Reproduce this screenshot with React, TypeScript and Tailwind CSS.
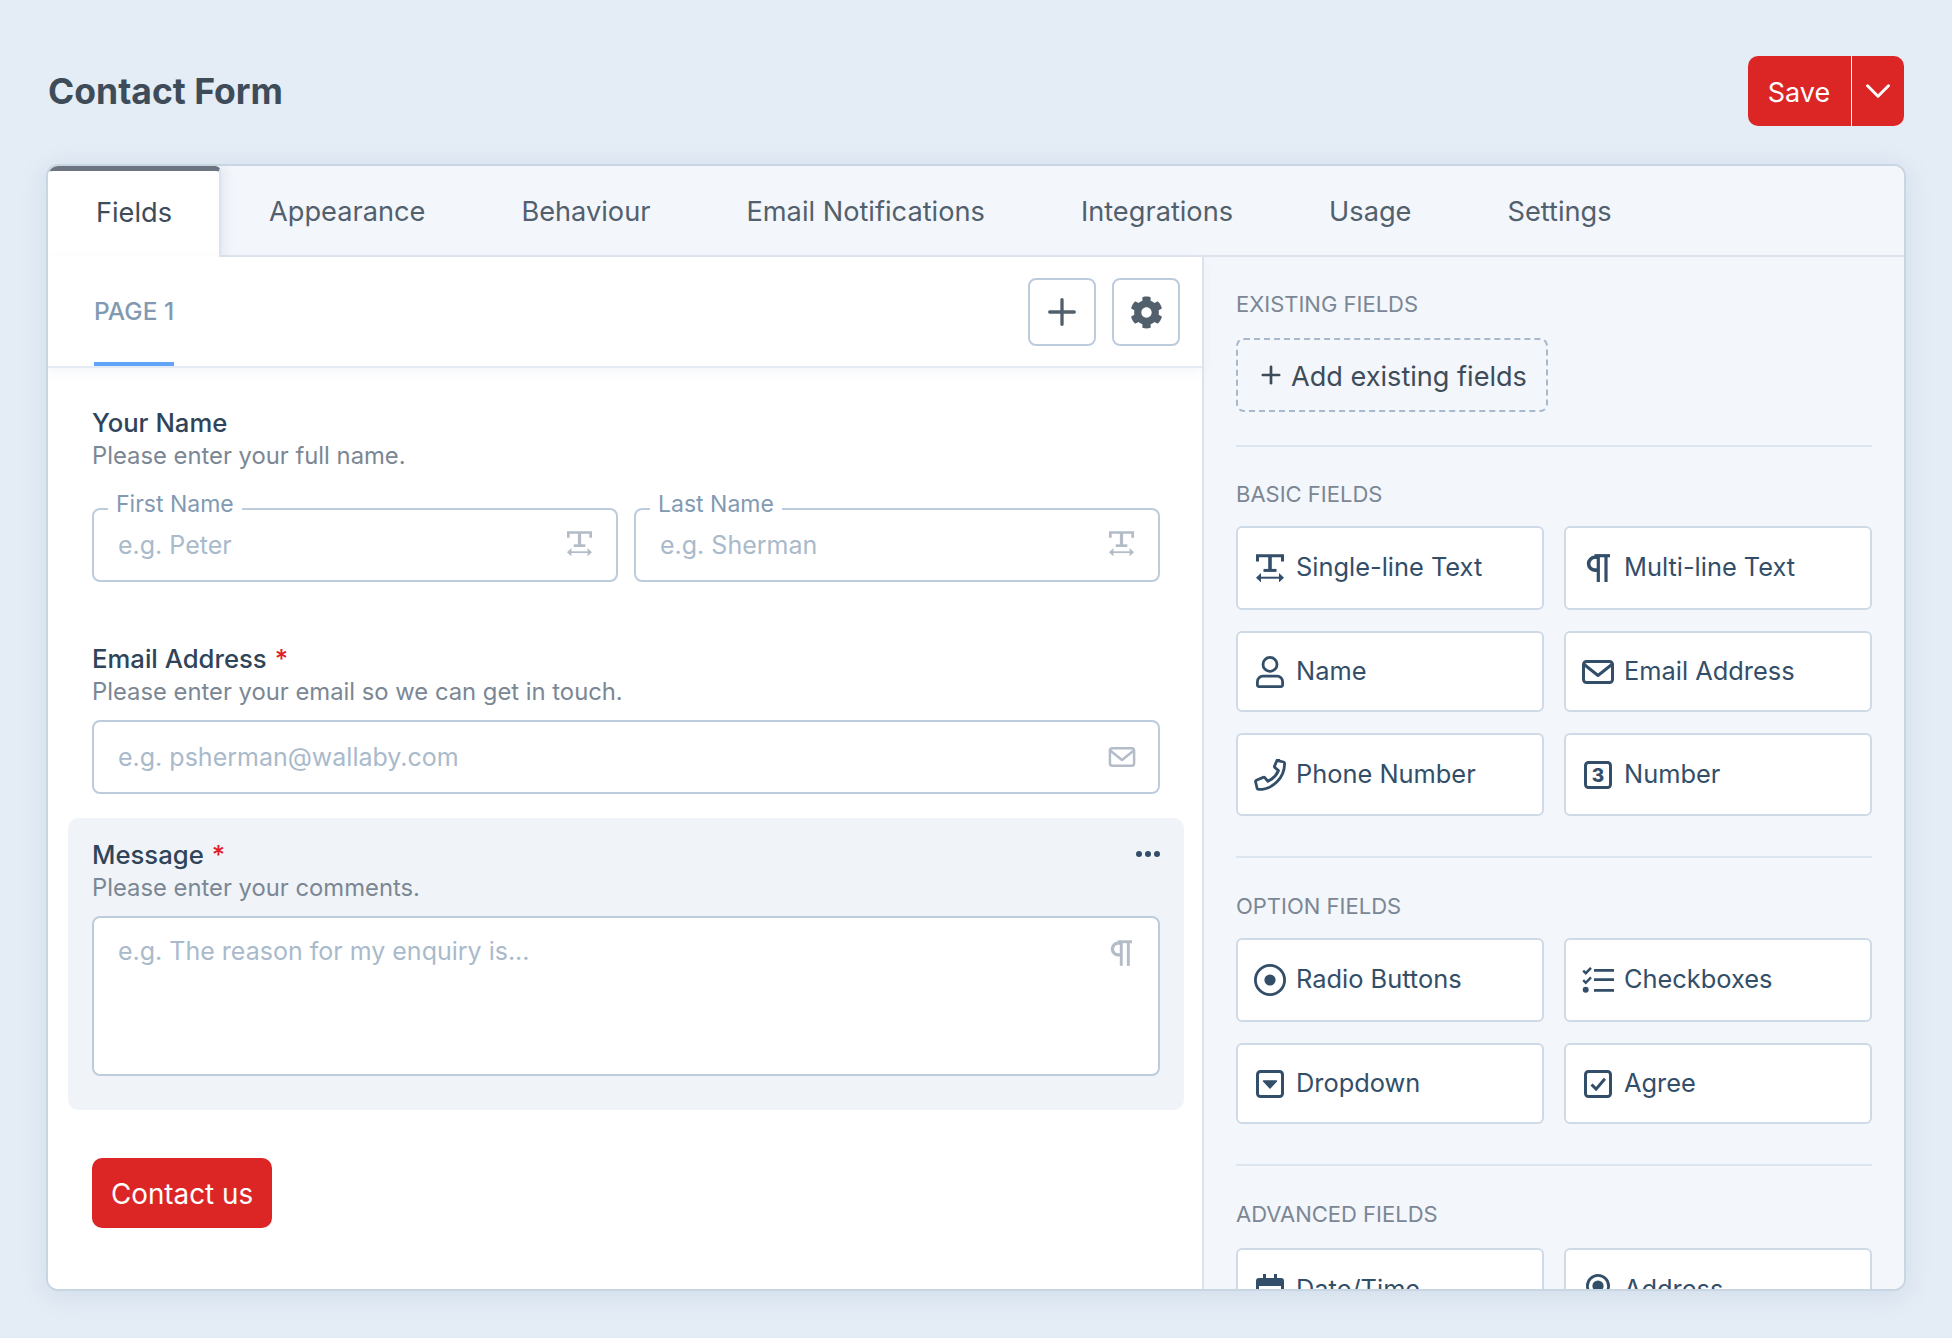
import { ReactNode } from "react";
import { FaCog } from "react-icons/fa";
import { ChevronDown, Plus } from "lucide-react";

function TextIcon({ className = "w-[28px] h-[28px]" }: { className?: string }) {
  return (
    <svg viewBox="0 0 28 28" className={className} fill="none" stroke="currentColor" strokeWidth="3">
      <path d="M1.5 7.5V1.7h25v5.8" />
      <path d="M14 2v14.5" strokeWidth="3.6" />
      <path d="M7.5 16.4h13" />
      <path d="M4 23.7h20" strokeWidth="2" />
      <path d="M5 19l-5 4.7 5 4.7z" fill="currentColor" stroke="none" />
      <path d="M23 19l5 4.7-5 4.7z" fill="currentColor" stroke="none" />
    </svg>
  );
}

function ParagraphIcon({ className = "w-[24px] h-[28px]" }: { className?: string }) {
  return (
    <svg viewBox="0 0 24 28" className={className} fill="none" stroke="currentColor" strokeWidth="3.2">
      <path d="M24 1.7H8.5" />
      <path d="M11 3.3H9a6.4 6.4 0 0 0 0 12.8h2" strokeWidth="3.6" />
      <path d="M12.3 2v26" />
      <path d="M20 2v26" />
    </svg>
  );
}

function UserIcon() {
  return (
    <svg viewBox="0 0 28 32" className="w-[28px] h-[32px]" fill="none" stroke="currentColor" strokeWidth="2.8">
      <circle cx="14" cy="8.4" r="7" />
      <path d="M7 20.2h14a5.6 5.6 0 0 1 5.6 5.6v3.2a1.6 1.6 0 0 1-1.6 1.6H3a1.6 1.6 0 0 1-1.6-1.6v-3.2A5.6 5.6 0 0 1 7 20.2z" />
    </svg>
  );
}

function MailIcon({ className = "w-[32px] h-[24px]" }: { className?: string }) {
  return (
    <svg viewBox="0 0 32 24" className={className} fill="none" stroke="currentColor" strokeWidth="3" strokeLinejoin="round">
      <rect x="1.5" y="1.5" width="29" height="21" rx="3" />
      <path d="M2.2 4.5L16 15.5 29.8 4.5" />
    </svg>
  );
}

function PhoneIcon() {
  return (
    <svg viewBox="0 0 32 32" className="w-[32px] h-[32px]" fill="none" stroke="currentColor" strokeWidth="2.8" strokeLinejoin="round">
      <path d="M23.6 1.6l6 1.4c.7.2 1 .8 1 1.5C30.6 18.8 19 30.4 4.7 30.4c-.7 0-1.4-.4-1.6-1.1l-1.5-6.3c-.2-.7.2-1.4.8-1.7l6.8-2.9c.6-.3 1.3-.1 1.8.4l2.9 3.5c4.7-2.2 8.5-6 10.6-10.7l-3.5-2.9c-.5-.4-.7-1.2-.4-1.8l2.9-6.6c.3-.6 1-.9 1.6-.7z" />
    </svg>
  );
}

function NumberIcon() {
  return (
    <svg viewBox="0 0 28 28" className="w-[28px] h-[28px]" fill="none" stroke="currentColor" strokeWidth="3">
      <rect x="1.5" y="1.5" width="25" height="25" rx="3" />
      <text x="14" y="21" textAnchor="middle" fontSize="19" fontWeight="800" fontFamily="Inter" fill="currentColor" stroke="none">3</text>
    </svg>
  );
}

function RadioIcon() {
  return (
    <svg viewBox="0 0 32 32" className="w-[32px] h-[32px]" fill="none" stroke="currentColor" strokeWidth="2.8">
      <circle cx="16" cy="16" r="14.6" />
      <circle cx="16" cy="16" r="5.6" fill="currentColor" stroke="none" />
    </svg>
  );
}

function CheckListIcon() {
  return (
    <svg viewBox="0 0 32 26" className="w-[32px] h-[26px]" fill="none" stroke="currentColor" strokeWidth="2.7">
      <path d="M12 3.3h20M12 12.7h20M12 23.3h20" />
      <path d="M1.2 3.6l2.6 2.6L9 .8" strokeWidth="2.4" />
      <path d="M1.2 13.2l2.6 2.6L9 10.4" strokeWidth="2.4" />
      <circle cx="3.7" cy="22.7" r="3" fill="currentColor" stroke="none" />
    </svg>
  );
}

function DropdownIcon() {
  return (
    <svg viewBox="0 0 28 28" className="w-[28px] h-[28px]" fill="none" stroke="currentColor" strokeWidth="3">
      <rect x="1.5" y="1.5" width="25" height="25" rx="3" />
      <path d="M7.5 11h13L14 18z" fill="currentColor" stroke="currentColor" strokeWidth="1.4" strokeLinejoin="round" />
    </svg>
  );
}

function AgreeIcon() {
  return (
    <svg viewBox="0 0 28 28" className="w-[28px] h-[28px]" fill="none" stroke="currentColor" strokeWidth="3">
      <rect x="1.5" y="1.5" width="25" height="25" rx="3" />
      <path d="M7.5 14.5l4.6 4.6 8.8-10.4" />
    </svg>
  );
}

function CalendarIcon() {
  return (
    <svg viewBox="0 0 28 32" className="w-[28px] h-[32px]" fill="none">
      <path d="M7 0h3v4h8V0h3v4h4a3 3 0 0 1 3 3v22a3 3 0 0 1-3 3H3a3 3 0 0 1-3-3V7a3 3 0 0 1 3-3h4z" fill="currentColor" />
      <rect x="3" y="12" width="22" height="17" fill="#fff" />
      <path d="M7 15h3v3H7zM12.5 15h3v3h-3zM18 15h3v3h-3z" fill="currentColor" />
    </svg>
  );
}

function PinIcon() {
  return (
    <svg viewBox="0 0 24 32" className="w-[24px] h-[32px]" fill="none" stroke="currentColor" strokeWidth="2.8">
      <path d="M12 1.4a10.6 10.6 0 0 1 10.6 10.6C22.6 19 12 30.5 12 30.5S1.4 19 1.4 12A10.6 10.6 0 0 1 12 1.4z" />
      <circle cx="12" cy="12" r="5.6" fill="currentColor" stroke="none" />
    </svg>
  );
}

function SectionLabel({ children }: { children: ReactNode }) {
  return <div className="text-[22px] leading-[32px] text-[#7b8794]">{children}</div>;
}

function FieldButton({ icon, label, height }: { icon: ReactNode; label: string; height: string }) {
  return (
    <button className={`flex items-center rounded-[6px] border-2 border-[#cfdae7] bg-white pl-[16px] text-[#334e68] text-[25.4px] ${height}`}>
      <span className="flex w-[32px] shrink-0 items-center justify-center">{icon}</span>
      <span className="ml-[10px] pb-[1px] whitespace-nowrap">{label}</span>
    </button>
  );
}

function FieldHeading({ label, desc, required }: { label: string; desc: string; required?: boolean }) {
  return (
    <div>
      <div className="text-[25.7px] font-medium leading-[32px] text-[#2f4459]">
        {label}
        {required && <span className="ml-[8px] text-[#e11d28]">*</span>}
      </div>
      <div className="mt-[1px] text-[23.8px] leading-[32px] text-[#7b8794]">{desc}</div>
    </div>
  );
}

function TextField({ label, placeholder }: { label: string; placeholder: string }) {
  return (
    <div className="relative flex h-[74px] flex-1 items-center rounded-[8px] border-2 border-[#bcccdc] bg-white">
      <span className="absolute left-[14px] top-[-22px] bg-white px-[8px] text-[23px] leading-[32px] text-[#829ab1]">{label}</span>
      <input placeholder={placeholder} className="h-full w-full bg-transparent pb-[1px] pl-[24px] pr-[60px] text-[25px] outline-none placeholder:text-[#a9bacb]" />
      <TextIcon className="absolute right-[24px] top-[21px] h-[25px] w-[25px] text-[#b3bcc7]" />
    </div>
  );
}

const tabs = ["Appearance", "Behaviour", "Email Notifications", "Integrations", "Usage", "Settings"];

export default function App() {
  return (
    <div className="h-[1338px] overflow-hidden bg-[#e4ecf5] px-[46px] font-['Inter',sans-serif]">
      <div className="flex h-[164px] items-start justify-between">
        <h1 className="ml-[2px] mt-[67px] text-[35.5px] font-bold leading-[50px] text-[#3e4c59]">Contact Form</h1>
        <div className="mr-[2px] mt-[56px] flex h-[70px] overflow-hidden rounded-[10px] bg-[#dc2626] text-white">
          <button className="w-[103px] pt-[4px] text-[27px]">Save</button>
          <div className="w-[1.5px] bg-white" />
          <button className="flex w-[52px] items-center justify-center">
            <ChevronDown className="h-[42px] w-[42px]" strokeWidth={1.7} />
          </button>
        </div>
      </div>

      <div className="h-[1127px] overflow-hidden rounded-[12px] border-2 border-[#c8d5e3] bg-white shadow-[0_4px_24px_rgba(120,150,190,0.18)]">
        <div className="flex h-[91px] border-b-2 border-[#dde3ec] bg-[#f3f6fb] text-[27.2px] text-[#52606d]">
          <div className="mb-[-2px] flex w-[173px] items-center justify-center rounded-t-[6px] border-t-[5px] border-r-2 border-t-[#6b7480] border-r-[#dde3ec] bg-white pb-[1px] pl-[1px] text-[#3e4c59] shadow-[4px_0_10px_rgba(180,195,215,0.25)]">Fields</div>
          {tabs.map((t) => (
            <div key={t} className="flex items-center px-[48px] pt-[3px] whitespace-nowrap">{t}</div>
          ))}
        </div>

        <div className="flex h-[1032px]">
          <div className="relative w-[1154px] shrink-0 bg-white">
            <div className="flex h-[111px] items-start justify-between border-b-2 border-[#e4ebf3] pl-[46px] pr-[22px] shadow-[0_4px_10px_rgba(226,232,240,0.4)]">
              <div className="flex h-[109px] flex-col justify-between">
                <div className="mt-[38px] text-[24.5px] font-medium leading-[32px] text-[#829ab1]">PAGE 1</div>
                <div className="h-[4px] w-[80px] bg-[#60a5fa]" />
              </div>
              <div className="mt-[21px] flex gap-[16px] text-[#52606d]">
                <button className="flex h-[68px] w-[68px] items-center justify-center rounded-[8px] border-2 border-[#bcccdc]">
                  <Plus className="h-[42px] w-[42px]" strokeWidth={1.9} />
                </button>
                <button className="flex h-[68px] w-[68px] items-center justify-center rounded-[8px] border-2 border-[#bcccdc]">
                  <FaCog className="h-[33px] w-[33px]" />
                </button>
              </div>
            </div>

            <div className="pl-[44px] pr-[42px] pt-[39px]">
              <FieldHeading label="Your Name" desc="Please enter your full name." />
              <div className="mt-[36px] flex gap-[16px]">
                <TextField label="First Name" placeholder="e.g. Peter" />
                <TextField label="Last Name" placeholder="e.g. Sherman" />
              </div>

              <div className="mt-[61px]">
                <FieldHeading label="Email Address" desc="Please enter your email so we can get in touch." required />
              </div>
              <div className="relative mt-[12px] flex h-[74px] items-center rounded-[8px] border-2 border-[#bcccdc] bg-white">
                <input placeholder="e.g. psherman@wallaby.com" className="h-full w-full bg-transparent pb-[1px] pl-[24px] pr-[60px] text-[25px] outline-none placeholder:text-[#a9bacb]" />
                <MailIcon className="absolute right-[22px] top-[25px] h-[20px] w-[28px] text-[#b3bcc7]" />
              </div>
            </div>

            <div className="relative ml-[20px] mr-[18px] mt-[24px] h-[292px] rounded-[10px] bg-[#f0f4f8] pl-[24px] pr-[24px] pt-[21px]">
              <FieldHeading label="Message" desc="Please enter your comments." required />
              <div className="absolute right-[24px] top-[33px] flex gap-[3px]">
                <span className="h-[6px] w-[6px] rounded-full bg-[#334e68]" />
                <span className="h-[6px] w-[6px] rounded-full bg-[#334e68]" />
                <span className="h-[6px] w-[6px] rounded-full bg-[#334e68]" />
              </div>
              <div className="relative mt-[12px] h-[160px] rounded-[8px] border-2 border-[#bcccdc] bg-white">
                <textarea placeholder="e.g. The reason for my enquiry is..." className="h-full w-full resize-none bg-transparent pl-[24px] pr-[60px] pt-[14px] text-[25px] leading-[38px] outline-none placeholder:text-[#a9bacb]" />
                <ParagraphIcon className="absolute right-[26px] top-[22px] h-[26px] w-[22px] text-[#b3bcc7]" />
              </div>
            </div>

            <button className="ml-[44px] mt-[48px] h-[70px] w-[180px] rounded-[10px] bg-[#dc2626] pt-[3px] text-[27.8px] text-white">Contact us</button>
          </div>

          <div className="flex-1 overflow-hidden border-l-2 border-[#dde3ec] bg-[#f3f6fb] pl-[32px] pr-[32px] pt-[31px]">
            <SectionLabel>EXISTING FIELDS</SectionLabel>
            <button className="mt-[18px] flex h-[74px] w-[312px] items-center justify-center rounded-[8px] border-2 border-dashed border-[#a9b9cc] pt-[4px] text-[27.1px] text-[#3e4c59]">
              <Plus className="mb-[5px] mr-[6px] h-[28px] w-[28px]" strokeWidth={2.3} />
              Add existing fields
            </button>
            <div className="mt-[33px] h-[2px] bg-[#dde5ef]" />

            <div className="mt-[31px]"><SectionLabel>BASIC FIELDS</SectionLabel></div>
            <div className="mt-[16px] grid grid-cols-2 gap-x-[20px] gap-y-[21px]">
              <FieldButton height="h-[84px]" icon={<TextIcon />} label="Single-line Text" />
              <FieldButton height="h-[84px]" icon={<ParagraphIcon />} label="Multi-line Text" />
              <FieldButton height="h-[81px]" icon={<UserIcon />} label="Name" />
              <FieldButton height="h-[81px]" icon={<MailIcon />} label="Email Address" />
              <FieldButton height="h-[83px]" icon={<PhoneIcon />} label="Phone Number" />
              <FieldButton height="h-[83px]" icon={<NumberIcon />} label="Number" />
            </div>
            <div className="mt-[40px] h-[2px] bg-[#dde5ef]" />

            <div className="mt-[32px]"><SectionLabel>OPTION FIELDS</SectionLabel></div>
            <div className="mt-[16px] grid grid-cols-2 gap-x-[20px] gap-y-[21px]">
              <FieldButton height="h-[84px]" icon={<RadioIcon />} label="Radio Buttons" />
              <FieldButton height="h-[84px]" icon={<CheckListIcon />} label="Checkboxes" />
              <FieldButton height="h-[81px]" icon={<DropdownIcon />} label="Dropdown" />
              <FieldButton height="h-[81px]" icon={<AgreeIcon />} label="Agree" />
            </div>
            <div className="mt-[40px] h-[2px] bg-[#dde5ef]" />

            <div className="mt-[32px]"><SectionLabel>ADVANCED FIELDS</SectionLabel></div>
            <div className="mt-[18px] grid grid-cols-2 gap-x-[20px] gap-y-[21px]">
              <FieldButton height="h-[83px]" icon={<CalendarIcon />} label="Date/Time" />
              <FieldButton height="h-[83px]" icon={<PinIcon />} label="Address" />
            </div>
          </div>
        </div>
      </div>
    </div>
  );
}
